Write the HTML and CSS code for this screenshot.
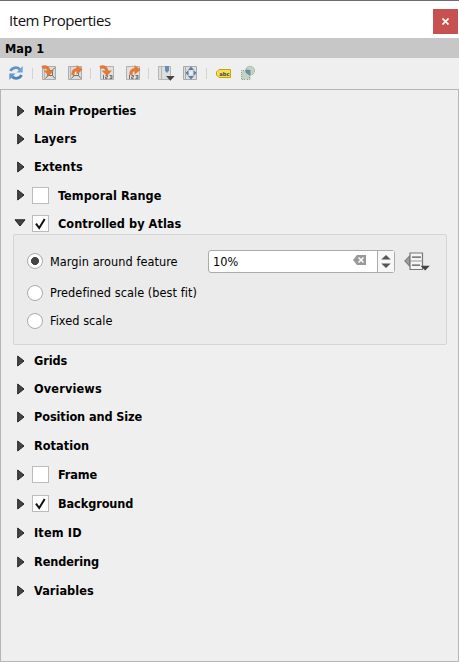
FILE: index.html
```html
<!DOCTYPE html>
<html lang="en">
<head>
<meta charset="utf-8">
<title>Item Properties</title>
<link rel="stylesheet" href="styles.css">
</head>
<body>
<svg class="defs" aria-hidden="true">
  <defs>
    <symbol id="right" viewBox="0 0 8 12"><path d="M.7 1 7 6 .7 11Z" fill="#444" stroke="#252525"/></symbol>
    <symbol id="down" viewBox="0 0 12 8"><path d="M1 .8h10L6 7Z" fill="#444" stroke="#252525"/></symbol>
    <symbol id="check" viewBox="0 0 17 17"><path d="M4 8.600 7.200 13 12.700 4" fill="none" stroke="#111" stroke-width="2"/></symbol>
    <symbol id="extent" viewBox="0 0 16 16"><path d="M1.500 1.500h13v13h-13z" fill="#dcdcdc" stroke="#ababab"/><path d="M3.500 2v12" stroke="#b5b5b5"/><path d="M6.500 5.500h5v5h-5zM14 2.500l-3 3M4.500 13.500l2.500-3M14 13.500l-2.500-3" fill="#eee" stroke="#707070"/></symbol>
    <symbol id="scale" viewBox="0 0 16 16"><path d="M1.500 1.500h13v13h-13z" fill="#e0e0e0" stroke="#b0b0b0"/><path d="M4.500 10v4M6.500 10.500h2v1.500h-2v1.500h2M10.500 10.500h2.500v3h-2.500M11 12h2" fill="none" stroke="#666" stroke-width=".9"/></symbol>
    <symbol id="in" viewBox="0 0 16 16"><path d="M1 2.500C5 1 8 3 8 6.500" fill="none" stroke="#e27a35" stroke-width="3.200"/><path d="M2.500 5.500h10.500L8 11Z" fill="#e27a35"/></symbol>
    <symbol id="out" viewBox="0 0 16 16"><path d="M6 10C5.500 6.500 7 4.700 10.500 4.700" fill="none" stroke="#e27a35" stroke-width="3.200"/><path d="M9.500 0 15.500 4.700l-6 5Z" fill="#e27a35"/></symbol>
  </defs>
</svg>
<main class="panel">
  <header class="titlebar"><h1>Item Properties</h1>
    <button class="close" aria-label="Close"><svg width="7" height="7" viewBox="0 0 7 7"><path d="M.5.5 6.500 6.500M6.500.5.5 6.500" stroke="#fff" stroke-width="1.700"/></svg></button>
  </header>
  <div class="item-name">Map 1</div>
  <div class="toolbar">
    <svg class="tool" viewBox="0 0 16 16"><path d="M2.500 6C4 2.500 9 1.500 12 4.500" fill="none" stroke="#6193cc" stroke-width="2.800"/><path d="M14.700 1v6.500H8.500Z" fill="#6fa2d8"/><path d="M13.500 10C12 13.500 7 14.500 4 11.500" fill="none" stroke="#4d82bd" stroke-width="2.800"/><path d="M1.300 15V8.500h6.200Z" fill="#6096d0"/></svg>
    <i class="sep s1"></i>
    <svg class="tool t2" viewBox="0 0 16 16"><use href="#extent"/><use href="#in"/></svg>
    <svg class="tool t3" viewBox="0 0 16 16"><use href="#extent"/><use href="#out"/></svg>
    <i class="sep s2"></i>
    <svg class="tool t4" viewBox="0 0 16 16"><use href="#scale"/><use href="#in"/></svg>
    <svg class="tool t5" viewBox="0 0 16 16"><use href="#scale"/><use href="#out"/></svg>
    <i class="sep s3"></i>
    <svg class="tool t6" viewBox="0 0 16 16"><path d="M.5 1.500h12v13H.5zM3.500 2v12" fill="#dedede" stroke="#b5b5b5"/><path d="M7 1h4v4.500L9 8 7 5.500Z" fill="#638db8"/><path d="M8 11h8.700l-4.300 4.700Z" fill="#444"/></svg>
    <svg class="tool t7" viewBox="0 0 16 16"><path d="M1.500 1.500h13v13h-13zM3.500 2v12" fill="#dedede" stroke="#aaa"/><path d="M9 1.500 12 5H6ZM9 14.500l3-3.500H6ZM3.500 8l3-3v6ZM14.500 8l-3-3v6Z" fill="#557fac"/><path d="M7.500 6.500h3v3h-3z" fill="#f0f0f0"/></svg>
    <i class="sep s4"></i>
    <svg class="tag" viewBox="0 0 15 9"><path d="M3 .5h11.500v8H3L.5 6V3Z" fill="#f5df55" stroke="#c6a20b"/><text x="3.200" y="6.500">abc</text></svg>
    <svg class="clip" viewBox="0 0 16 16"><circle cx="10" cy="5.800" r="4.500" fill="#c3d3c3"/><circle cx="10" cy="5.800" r="4.500" class="dots"/><path d="M1.500 5.500h4l5 5v4h-9z" fill="#c3d3c3"/><path d="M5 14.500H1.500v-9H4M9.500 10v4.500H6" class="dots"/><path d="M5 5.500 6.500 4.500l4 .5v5H9L6 8Z" fill="#6b8da5"/></svg>
  </div>
  <section class="properties">
    <div class="row"><svg class="arrow"><use href="#right"/></svg><span>Main Properties</span></div>
    <div class="row"><svg class="arrow"><use href="#right"/></svg><span class="wide">Layers</span></div>
    <div class="row"><svg class="arrow"><use href="#right"/></svg><span>Extents</span></div>
    <div class="row"><svg class="arrow"><use href="#right"/></svg><i class="box"></i><span class="checked-label">Temporal Range</span></div>
    <div class="row open"><svg class="arrow-down"><use href="#down"/></svg><i class="box"><svg><use href="#check"/></svg></i><span class="checked-label">Controlled by Atlas</span></div>
    <div class="atlas">
      <div class="option first"><i class="radio on"></i><span class="caption">Margin around feature</span>
        <div class="spin"><span class="value">10%</span>
          <svg class="clear" viewBox="0 0 13 10"><path d="M4 0h9v10H4L0 5Z" fill="#999"/><path d="m5.500 2.500 5 5m0-5-5 5" stroke="#fff" stroke-width="1.500"/></svg>
          <svg class="steps" viewBox="0 0 17 22"><path d="M3.500 9 8.500 4l5 5ZM3.500 13h10l-5 5Z" fill="#555"/></svg>
        </div>
        <svg class="override" viewBox="0 0 26 19"><path d="M6 3.500.7 9 6 14.500Z" fill="#9a9ca5" stroke="#666"/><path d="M6 1h12.500v16.500H6z" fill="#f4f4f2" stroke="#777" stroke-width="1.200"/><path d="M6 9h12.500" stroke="#999"/><path d="M8 5.200h9M8 13.200h8" stroke="#555" stroke-width="1.300"/><path d="M16.500 13.700h9.300l-4.600 4.800Z" fill="#444"/></svg>
      </div>
      <div class="option second"><i class="radio"></i><span>Predefined scale (best fit)</span></div>
      <div class="option third"><i class="radio"></i><span>Fixed scale</span></div>
    </div>
    <div class="row"><svg class="arrow"><use href="#right"/></svg><span class="narrow">Grids</span></div>
    <div class="row"><svg class="arrow"><use href="#right"/></svg><span class="wide">Overviews</span></div>
    <div class="row"><svg class="arrow"><use href="#right"/></svg><span class="narrow">Position and Size</span></div>
    <div class="row tall"><svg class="arrow"><use href="#right"/></svg><span>Rotation</span></div>
    <div class="row tall"><svg class="arrow"><use href="#right"/></svg><i class="box"></i><span class="checked-label narrow">Frame</span></div>
    <div class="row tall"><svg class="arrow"><use href="#right"/></svg><i class="box"><svg><use href="#check"/></svg></i><span class="checked-label narrow">Background</span></div>
    <div class="row tall"><svg class="arrow"><use href="#right"/></svg><span class="wide">Item ID</span></div>
    <div class="row tall"><svg class="arrow"><use href="#right"/></svg><span class="narrow">Rendering</span></div>
    <div class="row tall"><svg class="arrow"><use href="#right"/></svg><span>Variables</span></div>
  </section>
</main>
</body>
</html>
```
FILE: styles.css
```css
* { box-sizing: border-box; }
body { margin: 0; background: #efefef; color: #000; font: 12.6px "DejaVu Sans Condensed", "DejaVu Sans", sans-serif; font-stretch: condensed; letter-spacing: .05px; }
.defs { position: absolute; width: 0; height: 0; }
.panel { width: 459px; height: 662px; display: flex; flex-direction: column; }
.titlebar { height: 38px; border-top: 1px solid #6d6d6d; background: #fff; display: flex; justify-content: space-between; padding: 8px 1px 0 9px; }
h1 { margin: 0; font: 15px/22px "Open Sans", sans-serif; letter-spacing: -.45px; color: #111; }
.close { width: 25px; height: 25px; border: 0; padding: 0; background: #c75050; display: grid; place-items: center; }
.item-name { height: 20px; background: #c7c7c7; padding-left: 5px; font-weight: bold; line-height: 21px; }
.toolbar { height: 31px; display: flex; align-items: center; padding: 0 0 1px 8px; }
.toolbar svg, .toolbar i { flex: none; }
.tool { width: 16px; height: 16px; overflow: visible; }
.sep { width: 1px; height: 11px; background: #d3d3d3; }
.s1 { margin-left: 8px; }
.t2 { margin-left: 8px; }
.t3 { margin-left: 10px; }
.s2 { margin-left: 7px; }
.t4 { margin-left: 8px; }
.t5 { margin-left: 10px; }
.s3 { margin-left: 7px; }
.t6 { margin-left: 9px; }
.t7 { margin-left: 8px; }
.s4 { margin-left: 8px; }
.tag { width: 15px; height: 9px; margin-left: 9px; }
.tag text { font: bold 5.2px "DejaVu Sans", sans-serif; letter-spacing: 0; fill: #444; }
.clip { width: 16px; height: 16px; margin-left: 9px; }
.dots { fill: none; stroke: #8a9a8e; stroke-dasharray: 1 1; }
.properties { flex: 1; border: 1px solid #b5b5b5; padding-top: 7px; }
.row { height: 28px; display: flex; align-items: center; padding-left: 16px; font-weight: bold; line-height: 16px; }
.wide { letter-spacing: .15px; }
.narrow { letter-spacing: -.1px; }
.checked-label { padding-top: 1px; }
.tall { height: 29px; }
.arrow { width: 8px; height: 12px; margin-right: 9px; }
.arrow-down { width: 12px; height: 8px; margin: 0 6px 0 -3px; }
.row .box { margin-left: -2px; margin-right: 9px; }
.open .box { margin-left: 0; }
.box { width: 17px; height: 17px; border: 1px solid #bcbcbc; background: #fff; }
.box svg { display: block; width: 17px; height: 17px; margin: -1px; }
.atlas { height: 111px; margin: -3px 11px 2px 12px; padding: 12px 0 0 13px; border: 1px solid #d5d5d5; border-radius: 2px; background: #ebebeb; }
.option { display: flex; align-items: center; height: 28px; }
.option.second { height: 29px; margin-top: 3px; }
.option.third { height: 27px; }
.radio { width: 16px; height: 16px; border: 1px solid #aaa; border-radius: 50%; background: #fff; margin-right: 7px; }
.on { background: radial-gradient(circle, #444 0 3.7px, #fff 4.3px); }
.caption { width: 158px; }
.spin { width: 187px; height: 23px; border: 1px solid #aaa; border-radius: 3px; background: #fff; display: flex; align-items: center; }
.value { padding-left: 4px; flex: 1; }
.clear { width: 13px; height: 10px; margin: -3px 11px 0 0; }
.steps { width: 17px; height: 21px; border-left: 1px solid #aaa; background: #f7f7f7; }
.override { width: 26px; height: 19px; margin-left: 9px; }
```
